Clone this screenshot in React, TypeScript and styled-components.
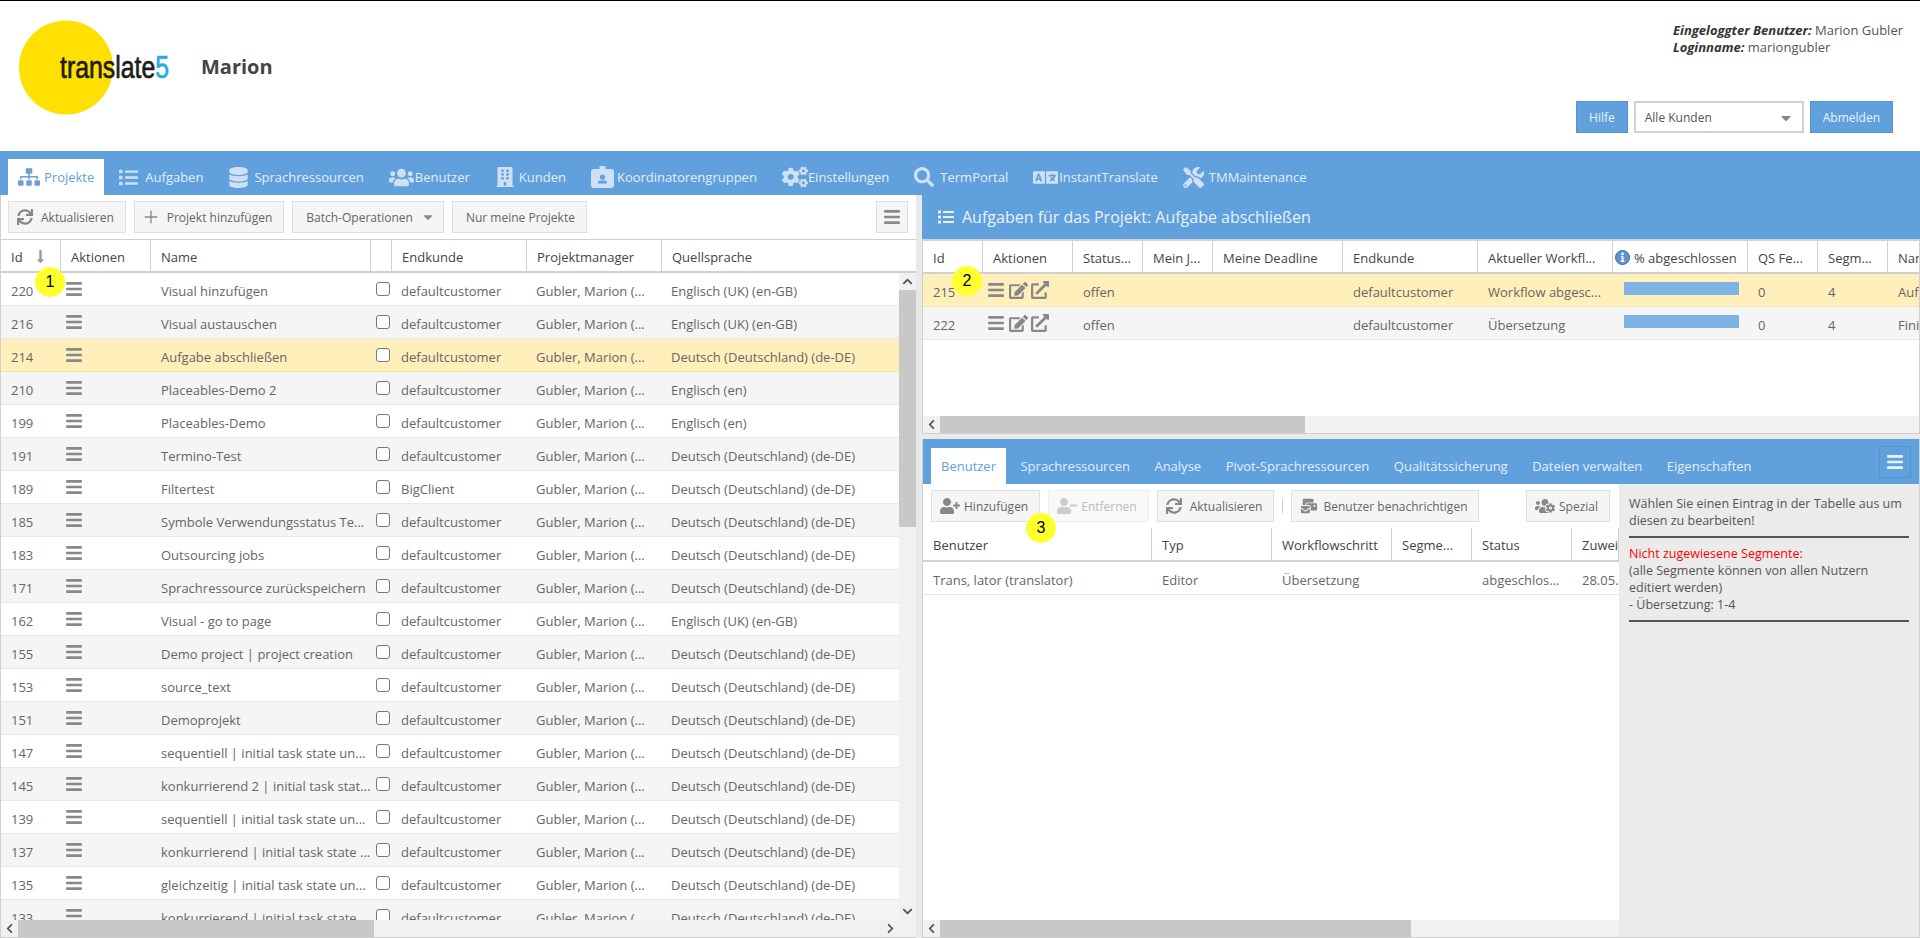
import React from "react";
import styled, { createGlobalStyle } from "styled-components";
import {
  FaSitemap, FaList, FaDatabase, FaUsers, FaBuilding, FaCogs, FaSearch, FaLanguage, FaTools,
  FaSync, FaBars, FaEdit, FaExternalLinkAlt, FaUserPlus, FaUserMinus, FaUsersCog,
  FaLongArrowAltDown, FaCaretDown, FaChevronUp, FaChevronDown, FaChevronLeft, FaChevronRight,
} from "react-icons/fa";
import { FaEnvelopesBulk } from "react-icons/fa6";
import { Plus } from "lucide-react";

const BLUE = "#5fa0dd";
const LINE = "#d0d0d0";

const Global = createGlobalStyle`
  html, body { margin: 0; padding: 0; background: #fff; }
  body { font-family: "Open Sans", "DejaVu Sans", sans-serif; font-size: 13px; color: #555; }
  * { box-sizing: border-box; }
`;

const Page = styled.div`
  position: relative;
  width: 1920px;
  height: 938px;
  overflow: hidden;
  border-top: 1px solid #000;
  display: flex;
  flex-direction: column;
`;

/* ---------- header ---------- */
const Header = styled.header`
  height: 150px;
  flex: none;
  display: flex;
  justify-content: space-between;
  padding: 19px 27px 0 19px;
`;
const Brand = styled.div`
  display: flex;
  align-items: flex-start;
`;
const ProjectTitle = styled.div`
  margin: 33px 0 0 30px;
  font-size: 20px;
  line-height: 28px;
  font-weight: 700;
  color: #444;
`;
const HeaderRight = styled.div`
  width: 317px;
  padding-top: 2px;
  display: flex;
  flex-direction: column;
`;
const UserInfo = styled.div`
  margin-left: 97px;
  line-height: 17px;
  white-space: nowrap;
  color: #555;
  b { font-style: italic; font-weight: 700; color: #333; }
`;
const HeaderActions = styled.div`
  margin-top: 45px;
  display: flex;
  justify-content: flex-end;
  gap: 6px;
`;
const PrimaryButton = styled.button`
  height: 32px;
  padding: 0 12px;
  border: 1px solid #5492d0;
  background: ${BLUE};
  color: #e9f2fb;
  font: 12px "Open Sans", sans-serif;
`;
const CustomerSelect = styled.div`
  width: 170px;
  height: 32px;
  border: 2px solid ${LINE};
  padding: 1px 9px 0;
  display: flex;
  align-items: center;
  justify-content: space-between;
  font-size: 12px;
  color: #555;
  svg { color: #888; margin-right: -1px; }
`;

/* ---------- main tabs ---------- */
const MainNav = styled.nav`
  height: 44px;
  flex: none;
  background: ${BLUE};
  padding-left: 8px;
  display: flex;
  align-items: flex-end;
  gap: 5px;
`;
const MainTab = styled.div<{ $active?: boolean }>`
  height: 36px;
  padding: 0 10px;
  display: flex;
  align-items: center;
  white-space: nowrap;
  background: ${(p) => (p.$active ? "#fff" : "transparent")};
  color: ${(p) => (p.$active ? BLUE : "#e4eef9")};
`;
const TabIcon = styled.span<{ $active?: boolean; $w?: number }>`
  width: ${(p) => p.$w ?? 26}px;
  flex: none;
  display: flex;
  align-items: center;
  color: ${(p) => (p.$active ? "#6f9fd0" : "#cfe0f2")};
`;

/* ---------- panes ---------- */
const Main = styled.main`
  flex: 1;
  min-height: 0;
  display: flex;
`;
const LeftPane = styled.section`
  width: 916px;
  flex: none;
  display: flex;
  flex-direction: column;
  border-left: 1px solid ${LINE};
`;
const Splitter = styled.div`
  width: 6px;
  flex: none;
  background: #e9e9e9;
`;
const RightPane = styled.section`
  flex: 1;
  min-width: 0;
  display: flex;
  flex-direction: column;
  background: #e9e9e9;
`;
const UpperPanel = styled.div`
  height: 239px;
  flex: none;
  display: flex;
  flex-direction: column;
  background: #fff;
  border-right: 1px solid ${LINE};
  border-left: 1px solid ${LINE};
  border-bottom: 1px solid ${LINE};
`;
const PanelTitle = styled.div`
  height: 46px;
  flex: none;
  margin: 0 -1px;
  padding-left: 16px;
  display: flex;
  align-items: center;
  gap: 8px;
  background: ${BLUE};
  color: #e9f2fb;
  font-size: 16px;
  border-bottom: 2px solid #d4d4d4;
`;
const LowerPanel = styled.div`
  margin-top: 5px;
  flex: 1;
  min-height: 0;
  display: flex;
  flex-direction: column;
  border-left: 1px solid ${LINE};
  border-right: 1px solid ${LINE};
  border-bottom: 1px solid ${LINE};
  background: #fff;
`;
const SubTabs = styled.div`
  height: 45px;
  flex: none;
  padding-left: 8px;
  background: ${BLUE};
  display: flex;
  align-items: flex-end;
  gap: 4.5px;
`;
const SubTab = styled.div<{ $active?: boolean }>`
  height: 36px;
  padding: 0 10px;
  display: flex;
  align-items: center;
  background: ${(p) => (p.$active ? "#fff" : "transparent")};
  color: ${(p) => (p.$active ? BLUE : "#e4eef9")};
`;
const BlueMenuButton = styled.div`
  margin: 7px 8px 0 auto;
  align-self: flex-start;
  width: 32px;
  height: 32px;
  border: 1px solid #5492d0;
  display: flex;
  align-items: center;
  justify-content: center;
  color: #e9f2fb;
`;
const LowerBody = styled.div`
  flex: 1;
  min-height: 0;
  display: flex;
`;
const AssignColumn = styled.div`
  width: 696px;
  flex: none;
  display: flex;
  flex-direction: column;
`;
const GridFill = styled.div`
  flex: 1;
  min-height: 0;
  overflow: hidden;
`;
const HelpPanel = styled.aside`
  flex: 1;
  background: #ebebeb;
  padding: 11px 10px;
  font-size: 12.5px;
  line-height: 17px;
  color: #555;
  hr {
    border: 0;
    height: 2px;
    background: #555;
    margin: 7px 0;
  }
`;
const RedText = styled.span`
  color: #f00;
`;

/* ---------- toolbars ---------- */
const Toolbar = styled.div<{ $pl?: number }>`
  height: 44px;
  flex: none;
  padding: 6px 8px 6px ${(p) => p.$pl ?? 8}px;
  display: flex;
  align-items: flex-start;
  gap: 8px;
  background: #fff;
`;
const ToolButton = styled.div<{ $disabled?: boolean }>`
  height: 32px;
  padding: 0 11px 0 13px;
  display: flex;
  align-items: center;
  gap: 8px;
  white-space: nowrap;
  font-size: 12px;
  background: ${(p) => (p.$disabled ? "#f9f9f9" : "#f5f5f5")};
  border: 1px solid ${(p) => (p.$disabled ? "#eee" : "#e0e0e0")};
  color: ${(p) => (p.$disabled ? "#bbb" : "#666")};
  svg { flex: none; color: ${(p) => (p.$disabled ? "#ccc" : "#888")}; }
`;
const LeadIcon = styled.span<{ $gap?: number; $pull?: number }>`
  display: flex;
  margin-left: -${(p) => p.$pull ?? 5}px;
  margin-right: ${(p) => (p.$gap ?? 8) - 8}px;
`;
const TrailIcon = styled.span`
  display: flex;
  margin-right: -3px;
`;
const ToolSeparator = styled.div`
  width: 1px;
  height: 14px;
  margin-top: 9px;
  background: #ccc;
`;
const MenuButton = styled(ToolButton)`
  margin-left: auto;
  width: 32px;
  padding: 0;
  justify-content: center;
`;
const PushRight = styled(ToolButton)`
  margin-left: auto;
  margin-right: 1px;
`;

/* ---------- grids ---------- */
const GridBox = styled.div`
  overflow: hidden;
  flex: none;
`;
const HeadRow = styled.div<{ $top?: boolean; $h?: number }>`
  height: ${(p) => p.$h ?? 34}px;
  display: flex;
  background: #fff;
  border-top: ${(p) => (p.$top ? `1px solid ${LINE}` : "0")};
  border-bottom: 2px solid ${LINE};
  color: #444;
`;
const HeadCell = styled.div<{ $w: number; $tight?: boolean }>`
  width: ${(p) => p.$w}px;
  flex: none;
  padding: 2px ${(p) => (p.$tight ? "2px" : "10px")} 0;
  display: flex;
  align-items: center;
  gap: ${(p) => (p.$tight ? 4 : 10)}px;
  white-space: nowrap;
  overflow: hidden;
  border-right: 1px solid ${LINE};
  svg { flex: none; }
`;
const Row = styled.div<{ $sel?: boolean; $alt?: boolean }>`
  height: 33px;
  display: flex;
  align-items: center;
  background: ${(p) => (p.$sel ? "#ffefbb" : p.$alt ? "#f5f5f5" : "#fff")};
  border-bottom: 1px solid ${(p) => (p.$sel ? "#f3e2ad" : "#e8e8e8")};
  color: #666;
`;
const Cell = styled.div<{ $w: number }>`
  width: ${(p) => p.$w}px;
  flex: none;
  padding: 3px 10px 0;
  min-height: 20px;
  white-space: nowrap;
  overflow: hidden;
`;
const ActionCell = styled(Cell)`
  padding: 0 4px;
  display: flex;
  align-items: center;
  gap: 3.5px;
  color: #888;
`;
const CheckCell = styled(Cell)`
  padding: 0 0 0 5px;
  display: flex;
  align-items: center;
`;
const CheckBox = styled.span`
  width: 14px;
  height: 14px;
  border: 1px solid #777;
  border-radius: 3px;
  background: #fff;
`;
const BarCell = styled(Cell)`
  align-self: flex-start;
  padding: 8px 0 0 11px;
`;
const Progress = styled.div`
  width: 115px;
  height: 13px;
  background: #7fb3e6;
`;

/* ---------- scrollbars ---------- */
const ScrollBody = styled.div`
  flex: 1;
  min-height: 0;
  display: flex;
`;
const RowsClip = styled.div`
  flex: 1;
  min-width: 0;
  overflow: hidden;
`;
const VBar = styled.div`
  width: 17px;
  flex: none;
  display: flex;
  flex-direction: column;
  background: #f1f1f1;
`;
const VThumb = styled.div`
  height: 237px;
  background: #c8c8c8;
`;
const HBar = styled.div`
  height: 17px;
  flex: none;
  display: flex;
  background: #f1f1f1;
`;
const HThumb = styled.div<{ $w: number }>`
  width: ${(p) => p.$w}px;
  flex: none;
  background: #c8c8c8;
`;
const Arrow = styled.div<{ $end?: boolean }>`
  width: 17px;
  height: 17px;
  flex: none;
  margin-${(p) => (p.$end ? "left" : "right")}: ${(p) => (p.$end ? "auto" : "0")};
  display: flex;
  align-items: center;
  justify-content: center;
  color: #555;
  background: #f1f1f1;
`;
const VSpacer = styled.div`
  flex: 1;
`;
const BottomEdge = styled.div`
  height: 1px;
  flex: none;
  background: ${LINE};
`;

/* ---------- callouts ---------- */
const Callout = styled.div<{ $x: number; $y: number }>`
  position: absolute;
  left: ${(p) => p.$x - 15}px;
  top: ${(p) => p.$y - 15}px;
  width: 30px;
  height: 30px;
  border-radius: 50%;
  background: #ffff2e;
  color: #000;
  display: flex;
  align-items: center;
  justify-content: center;
  font: 16px "Liberation Sans", sans-serif;
`;

const Logo = () => (
  <svg width="152" height="96" viewBox="0 0 152 96" aria-label="translate5">
    <circle cx="47" cy="47.5" r="47" fill="#ffe000" />
    <text x="41" y="58" fontFamily="Liberation Sans, sans-serif" fontSize="32" fill="#1c1c1c" stroke="#1c1c1c" strokeWidth="0.7" textLength="109" lengthAdjust="spacingAndGlyphs">
      translate<tspan fill="#29abe2" stroke="#29abe2">5</tspan>
    </text>
  </svg>
);

const BadgeIcon = () => (
  <svg width="23" height="22" viewBox="0 0 23 22" fill="currentColor">
    <path fillRule="evenodd" d="M3 3h5.5V1.5a3 3 0 0 1 6 0V3H20a3 3 0 0 1 3 3v13a3 3 0 0 1-3 3H3a3 3 0 0 1-3-3V6a3 3 0 0 1 3-3zm8.5 5.5a2.6 2.6 0 1 0 0 5.2 2.6 2.6 0 0 0 0-5.2zM7 17.5h9v-1.2c0-1-1-1.8-2.2-1.8H9.2C8 14.5 7 15.3 7 16.3z" />
  </svg>
);

const InfoIcon = () => (
  <svg width="15" height="15" viewBox="0 0 15 15">
    <circle cx="7.5" cy="7.5" r="7" fill="#5f93cf" stroke="#3a6ca8" />
    <circle cx="7.5" cy="3.9" r="1.3" fill="#fff" />
    <path d="M5.9 6.2h2.6v4.6h1v1.2H5.7v-1.2h1V7.4h-.8z" fill="#fff" />
  </svg>
);

const mainTabs: [string, React.ReactNode, number?][] = [
  ["Projekte", <FaSitemap size={22} />],
  ["Aufgaben", <FaList size={19} />],
  ["Sprachressourcen", <FaDatabase size={21} />],
  ["Benutzer", <FaUsers size={25} />],
  ["Kunden", <FaBuilding size={20} />, 24],
  ["Koordinatorengruppen", <BadgeIcon />],
  ["Einstellungen", <FaCogs size={26} />],
  ["TermPortal", <FaSearch size={20} />],
  ["InstantTranslate", <FaLanguage size={25} />],
  ["TMMaintenance", <FaTools size={21} />],
];

const leftCols = [60, 90, 220, 20, 135, 135, 255];
const gb = "Englisch (UK) (en-GB)";
const de = "Deutsch (Deutschland) (de-DE)";
const en = "Englisch (en)";
const projects: [string, string, string, string][] = [
  ["220", "Visual hinzufügen", "defaultcustomer", gb],
  ["216", "Visual austauschen", "defaultcustomer", gb],
  ["214", "Aufgabe abschließen", "defaultcustomer", de],
  ["210", "Placeables-Demo 2", "defaultcustomer", en],
  ["199", "Placeables-Demo", "defaultcustomer", en],
  ["191", "Termino-Test", "defaultcustomer", de],
  ["189", "Filtertest", "BigClient", de],
  ["185", "Symbole Verwendungsstatus Te...", "defaultcustomer", de],
  ["183", "Outsourcing jobs", "defaultcustomer", de],
  ["171", "Sprachressource zurückspeichern", "defaultcustomer", de],
  ["162", "Visual - go to page", "defaultcustomer", gb],
  ["155", "Demo project | project creation", "defaultcustomer", de],
  ["153", "source_text", "defaultcustomer", de],
  ["151", "Demoprojekt", "defaultcustomer", de],
  ["147", "sequentiell | initial task state un...", "defaultcustomer", de],
  ["145", "konkurrierend 2 | initial task stat...", "defaultcustomer", de],
  ["139", "sequentiell | initial task state un...", "defaultcustomer", de],
  ["137", "konkurrierend | initial task state ...", "defaultcustomer", de],
  ["135", "gleichzeitig | initial task state un...", "defaultcustomer", de],
  ["133", "konkurrierend | initial task state ...", "defaultcustomer", de],
];

const taskCols = [60, 90, 70, 70, 130, 135, 135, 135, 70, 70, 120];
const taskHeads = ["Id", "Aktionen", "Status...", "Mein J...", "Meine Deadline", "Endkunde", "Aktueller Workfl..."];
const tasks = [
  { id: "215", wf: "Workflow abgesc...", name: "Aufgabe abschließen", sel: true },
  { id: "222", wf: "Übersetzung", name: "Finish", sel: false },
];

const userCols = [229, 120, 120, 80, 100, 47];
const userHeads = ["Benutzer", "Typ", "Workflowschritt", "Segme...", "Status", "Zuwei"];
const userRow = ["Trans, lator (translator)", "Editor", "Übersetzung", "", "abgeschlos...", "28.05."];
const subTabs = ["Benutzer", "Sprachressourcen", "Analyse", "Pivot-Sprachressourcen", "Qualitätssicherung", "Dateien verwalten", "Eigenschaften"];

export default function App() {
  return (
    <Page>
      <Global />
      <Header>
        <Brand>
          <Logo />
          <ProjectTitle>Marion</ProjectTitle>
        </Brand>
        <HeaderRight>
          <UserInfo>
            <b>Eingeloggter Benutzer:</b> Marion Gubler
            <br />
            <b>Loginname:</b> mariongubler
          </UserInfo>
          <HeaderActions>
            <PrimaryButton>Hilfe</PrimaryButton>
            <CustomerSelect>
              Alle Kunden
              <FaCaretDown size={16} />
            </CustomerSelect>
            <PrimaryButton>Abmelden</PrimaryButton>
          </HeaderActions>
        </HeaderRight>
      </Header>

      <MainNav>
        {mainTabs.map(([label, icon, w], i) => (
          <MainTab key={label} $active={i === 0}>
            <TabIcon $active={i === 0} $w={w}>{icon}</TabIcon>
            {label}
          </MainTab>
        ))}
      </MainNav>

      <Main>
        <LeftPane>
          <Toolbar $pl={7}>
            <ToolButton><LeadIcon><FaSync size={16} /></LeadIcon>Aktualisieren</ToolButton>
            <ToolButton><LeadIcon $pull={7} $gap={6}><Plus size={20} strokeWidth={1.6} /></LeadIcon>Projekt hinzufügen</ToolButton>
            <ToolButton>Batch-Operationen<TrailIcon><FaCaretDown size={14} /></TrailIcon></ToolButton>
            <ToolButton>Nur meine Projekte</ToolButton>
            <MenuButton><FaBars size={18} /></MenuButton>
          </Toolbar>
          <GridBox>
            <HeadRow $top>
              <HeadCell $w={leftCols[0]}>Id<FaLongArrowAltDown size={15} color="#999" /></HeadCell>
              <HeadCell $w={leftCols[1]}>Aktionen</HeadCell>
              <HeadCell $w={leftCols[2]}>Name</HeadCell>
              <HeadCell $w={leftCols[3]} />
              <HeadCell $w={leftCols[4]}>Endkunde</HeadCell>
              <HeadCell $w={leftCols[5]}>Projektmanager</HeadCell>
              <HeadCell $w={leftCols[6]}>Quellsprache</HeadCell>
            </HeadRow>
          </GridBox>
          <ScrollBody>
            <RowsClip>
              {projects.map(([id, name, customer, lang], i) => (
                <Row key={id} $sel={id === "214"} $alt={i % 2 === 1}>
                  <Cell $w={leftCols[0]}>{id}</Cell>
                  <ActionCell $w={leftCols[1]}><FaBars size={18} /></ActionCell>
                  <Cell $w={leftCols[2]}>{name}</Cell>
                  <CheckCell $w={leftCols[3]}><CheckBox /></CheckCell>
                  <Cell $w={leftCols[4]}>{customer}</Cell>
                  <Cell $w={leftCols[5]}>Gubler, Marion (...</Cell>
                  <Cell $w={238}>{lang}</Cell>
                </Row>
              ))}
            </RowsClip>
            <VBar>
              <Arrow><FaChevronUp size={11} /></Arrow>
              <VThumb />
              <VSpacer />
              <Arrow><FaChevronDown size={11} /></Arrow>
            </VBar>
          </ScrollBody>
          <HBar>
            <Arrow><FaChevronLeft size={11} /></Arrow>
            <HThumb $w={356} />
            <Arrow $end><FaChevronRight size={11} /></Arrow>
            <Arrow />
          </HBar>
          <BottomEdge />
        </LeftPane>

        <Splitter />

        <RightPane>
          <UpperPanel>
            <PanelTitle>
              <FaList size={16} />
              Aufgaben für das Projekt: Aufgabe abschließen
            </PanelTitle>
            <GridBox>
              <HeadRow $h={33}>
                {taskHeads.map((h, i) => (
                  <HeadCell key={h} $w={taskCols[i]}>{h}</HeadCell>
                ))}
                <HeadCell $w={taskCols[7]} $tight><InfoIcon />% abgeschlossen</HeadCell>
                <HeadCell $w={taskCols[8]}>QS Fe...</HeadCell>
                <HeadCell $w={taskCols[9]}>Segm...</HeadCell>
                <HeadCell $w={taskCols[10]}>Name</HeadCell>
              </HeadRow>
            </GridBox>
            <GridFill>
              {tasks.map((t) => (
                <Row key={t.id} $sel={t.sel} $alt={!t.sel}>
                  <Cell $w={taskCols[0]}>{t.id}</Cell>
                  <ActionCell $w={taskCols[1]}>
                    <FaBars size={18} />
                    <FaEdit size={19} />
                    <FaExternalLinkAlt size={18} />
                  </ActionCell>
                  <Cell $w={taskCols[2]}>offen</Cell>
                  <Cell $w={taskCols[3]} />
                  <Cell $w={taskCols[4]} />
                  <Cell $w={taskCols[5]}>defaultcustomer</Cell>
                  <Cell $w={taskCols[6]}>{t.wf}</Cell>
                  <BarCell $w={taskCols[7]}><Progress /></BarCell>
                  <Cell $w={taskCols[8]}>0</Cell>
                  <Cell $w={taskCols[9]}>4</Cell>
                  <Cell $w={taskCols[10]}>{t.name}</Cell>
                </Row>
              ))}
            </GridFill>
            <HBar>
              <Arrow><FaChevronLeft size={11} /></Arrow>
              <HThumb $w={365} />
            </HBar>
          </UpperPanel>

          <LowerPanel>
            <SubTabs>
              {subTabs.map((t, i) => (
                <SubTab key={t} $active={i === 0}>{t}</SubTab>
              ))}
              <BlueMenuButton><FaBars size={18} /></BlueMenuButton>
            </SubTabs>
            <LowerBody>
              <AssignColumn>
                <Toolbar>
                  <ToolButton><LeadIcon $gap={4}><FaUserPlus size={20} /></LeadIcon>Hinzufügen</ToolButton>
                  <ToolButton $disabled><LeadIcon $gap={4}><FaUserMinus size={20} /></LeadIcon>Entfernen</ToolButton>
                  <ToolButton><LeadIcon><FaSync size={16} /></LeadIcon>Aktualisieren</ToolButton>
                  <ToolSeparator />
                  <ToolButton><LeadIcon $gap={5}><FaEnvelopesBulk size={18} /></LeadIcon>Benutzer benachrichtigen</ToolButton>
                  <PushRight><LeadIcon $gap={4}><FaUsersCog size={20} /></LeadIcon>Spezial</PushRight>
                </Toolbar>
                <GridBox>
                  <HeadRow>
                    {userHeads.map((h, i) => (
                      <HeadCell key={h} $w={userCols[i]}>{h}</HeadCell>
                    ))}
                  </HeadRow>
                </GridBox>
                <GridFill>
                  <Row>
                    {userRow.map((v, i) => (
                      <Cell key={i} $w={userCols[i]}>{v}</Cell>
                    ))}
                  </Row>
                </GridFill>
                <HBar>
                  <Arrow><FaChevronLeft size={11} /></Arrow>
                  <HThumb $w={471} />
                </HBar>
              </AssignColumn>
              <HelpPanel>
                Wählen Sie einen Eintrag in der Tabelle aus um diesen zu bearbeiten!
                <hr />
                <RedText>Nicht zugewiesene Segmente:</RedText>
                <br />
                (alle Segmente können von allen Nutzern editiert werden)
                <br />- Übersetzung: 1-4
                <hr />
              </HelpPanel>
            </LowerBody>
          </LowerPanel>
        </RightPane>
      </Main>

      <Callout $x={50} $y={281}>1</Callout>
      <Callout $x={967} $y={280}>2</Callout>
      <Callout $x={1041} $y={527}>3</Callout>
    </Page>
  );
}
